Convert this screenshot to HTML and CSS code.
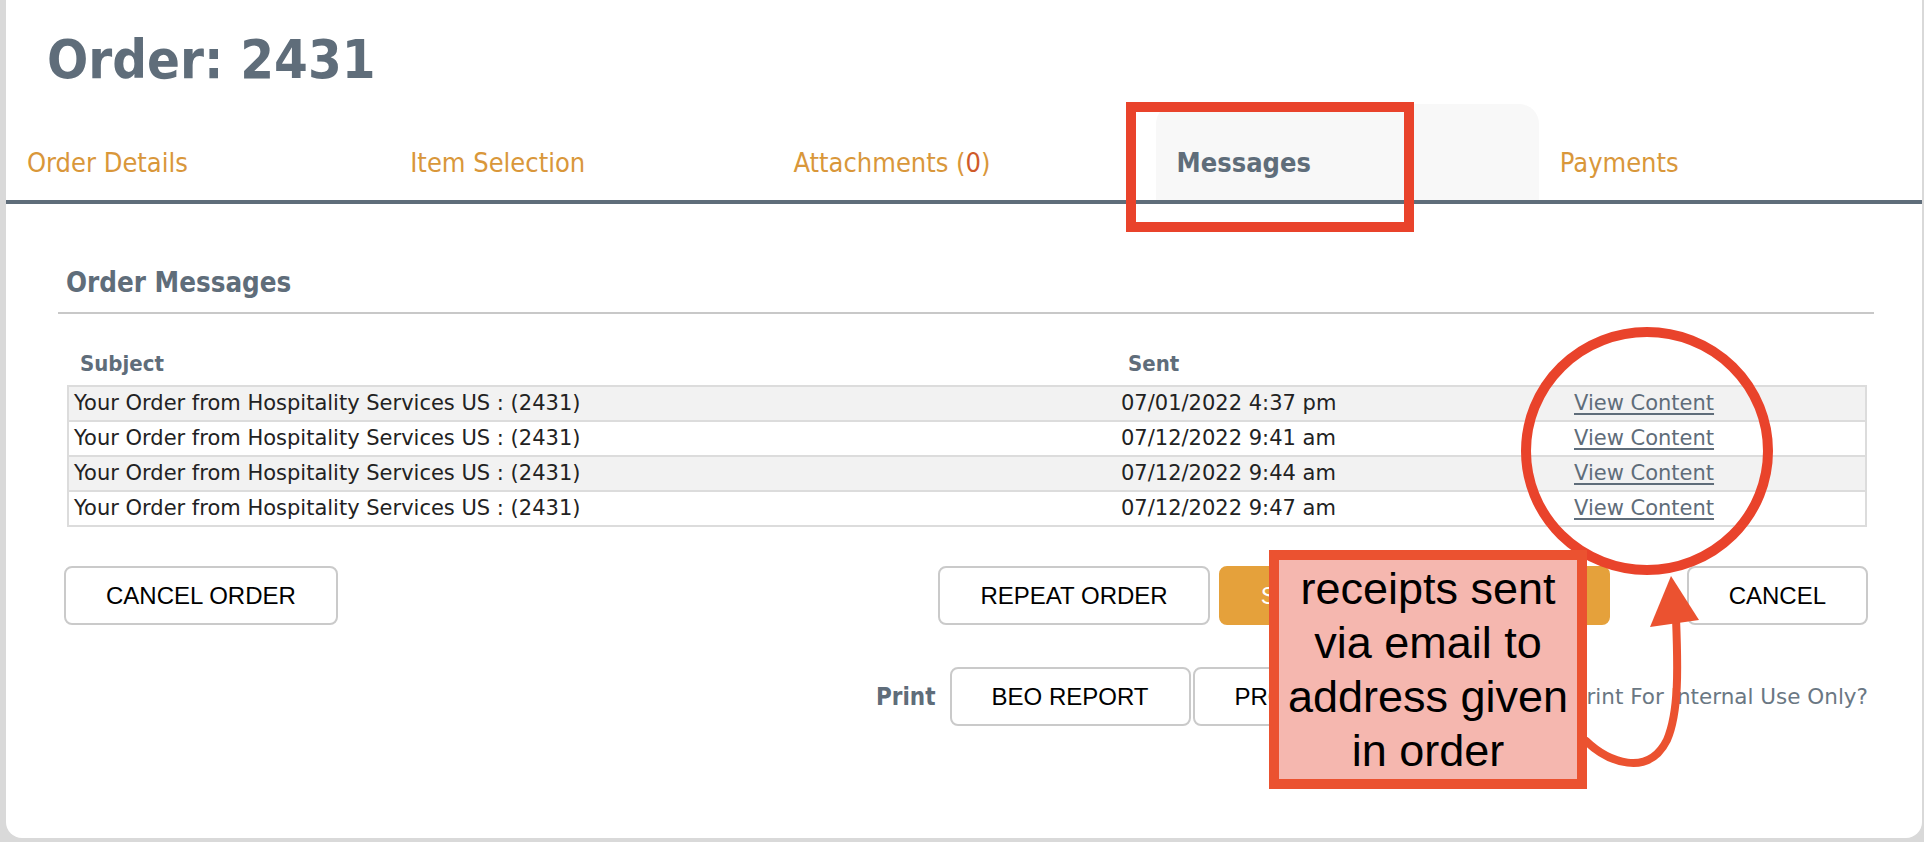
FILE: index.html
```html
<!DOCTYPE html>
<html lang="en">
<head>
<meta charset="utf-8">
<title>Order: 2431 – Messages</title>
<link rel="stylesheet" href="styles.css">
</head>
<body>
<div class="card">
  <h1 class="title">Order: 2431</h1>
  <nav class="tabs">
    <a class="tab">Order Details</a>
    <a class="tab">Item Selection</a>
    <a class="tab">Attachments (<span class="count">0</span>)</a>
    <a class="tab tab-active">Messages</a>
    <a class="tab">Payments</a>
  </nav>

  <section class="messages">
    <h2 class="section-title">Order Messages</h2>
    <table class="msg-table">
      <colgroup>
        <col class="col-subject">
        <col class="col-sent">
        <col class="col-link">
      </colgroup>
      <thead>
        <tr><th>Subject</th><th>Sent</th><th></th></tr>
      </thead>
      <tbody>
        <tr><td>Your Order from Hospitality Services US : (2431)</td><td>07/01/2022 4:37 pm</td><td><a class="link">View Content</a></td></tr>
        <tr><td>Your Order from Hospitality Services US : (2431)</td><td>07/12/2022 9:41 am</td><td><a class="link">View Content</a></td></tr>
        <tr><td>Your Order from Hospitality Services US : (2431)</td><td>07/12/2022 9:44 am</td><td><a class="link">View Content</a></td></tr>
        <tr><td>Your Order from Hospitality Services US : (2431)</td><td>07/12/2022 9:47 am</td><td><a class="link">View Content</a></td></tr>
      </tbody>
    </table>

    <div class="actions">
      <button class="btn">CANCEL ORDER</button>
      <div class="actions-right">
        <button class="btn">REPEAT ORDER</button>
        <button class="btn btn-primary">SAVE ORDER CHANGES</button>
        <button class="btn btn-cancel">CANCEL</button>
      </div>
    </div>

    <div class="print-row">
      <span class="print-label">Print</span>
      <button class="btn">BEO REPORT</button>
      <button class="btn btn-pro">PROPOSAL REPORT</button>
      <span class="internal">Print For Internal Use Only?</span>
    </div>
  </section>
</div>

<svg class="marks" width="1924" height="842" viewBox="0 0 1924 842">
  <rect x="1131" y="107" width="278" height="120" fill="none" stroke="#e9432b" stroke-width="10"/>
  <ellipse cx="1647" cy="451" rx="121" ry="119" fill="none" stroke="#e9432b" stroke-width="10"/>
  <path d="M1586 741 C 1608 762, 1648 778, 1667 740 C 1679 712, 1678 668, 1676 618" fill="none" stroke="#eb5230" stroke-width="8" stroke-linecap="round"/>
  <polygon points="1671,576 1650,627 1699,620" fill="#eb5230"/>
</svg>
<div class="note">receipts sent via email to address given in order</div>
</body>
</html>
```

FILE: styles.css
```css
* { box-sizing: border-box; }

html, body {
  margin: 0;
  padding: 0;
}

body {
  width: 1924px;
  height: 842px;
  background: #d9d9d9;
  position: relative;
  overflow: hidden;
  font-family: "DejaVu Sans Condensed", "DejaVu Sans", sans-serif;
  font-stretch: condensed;
}

.card {
  margin-left: 6px;
  margin-right: 2px;
  height: 838px;
  background: #ffffff;
  border-radius: 0 0 16px 16px;
  padding-top: 28px;
}

.title {
  margin: 0;
  padding-left: 41px;
  font-size: 54px;
  line-height: 64px;
  font-weight: bold;
  color: #5f6d7a;
}

.tabs {
  display: flex;
  margin-top: 12px;
  border-bottom: 4px solid #5f6d7a;
}

.tab {
  flex: 1 1 0;
  padding: 43px 21px 21px;
  font-size: 27px;
  line-height: 32px;
  color: #d9973a;
  white-space: nowrap;
}

.count { color: #cf5a2a; }

.tab-active {
  background: #f8f8f8;
  border-radius: 20px 20px 0 0;
  color: #5f6d7a;
  font-weight: bold;
}

.messages {
  margin: 62px 48px 0 52px;
}

.section-title {
  margin: 0;
  padding: 0 0 14px 8px;
  border-bottom: 2px solid #c8c8c8;
  font-size: 27.5px;
  line-height: 32px;
  font-weight: bold;
  color: #5f6d7a;
}

.msg-table {
  width: 1798px;
  margin: 27px 9px 0;
  border-collapse: collapse;
  table-layout: fixed;
}

.col-subject { width: 1048px; }
.col-sent { width: 453px; }
.col-link { width: 297px; }

.msg-table th {
  height: 45px;
  padding: 0 0 0 12px;
  text-align: left;
  vertical-align: middle;
  font-size: 22px;
  font-weight: bold;
  color: #5f6d7a;
}

.msg-table td {
  height: 33px;
  padding: 0 0 0 5px;
  line-height: 33px;
  font-family: "DejaVu Sans", sans-serif;
  font-stretch: normal;
  font-size: 21px;
  color: #222222;
  white-space: nowrap;
  border-top: 2px solid #dcdcdc;
  border-bottom: 2px solid #dcdcdc;
}

.msg-table td:first-child { border-left: 2px solid #dcdcdc; }
.msg-table td:last-child { border-right: 2px solid #dcdcdc; }

.msg-table tbody tr:nth-child(odd) td { background: #f2f2f2; }

.link {
  color: #5f6d7a;
  text-decoration: underline;
  text-decoration-thickness: 2px;
  text-underline-offset: 3px;
}

.actions {
  display: flex;
  justify-content: space-between;
  margin-top: 39px;
  padding: 0 6px;
}

.actions-right {
  display: flex;
}

.btn {
  height: 59px;
  padding: 0 40px;
  border: 2px solid #cacaca;
  border-radius: 8px;
  background: #ffffff;
  color: #000000;
  font-family: "Liberation Sans", Arial, sans-serif;
  font-size: 24px;
  white-space: nowrap;
}

.btn-primary {
  width: 391px;
  margin-left: 9px;
  padding: 0 40px;
  text-align: left;
  background: #e5a13b;
  border-color: #e5a13b;
  color: #ffffff;
}

.btn-cancel { margin-left: 77px; }

.print-row {
  display: flex;
  justify-content: flex-end;
  align-items: center;
  margin-top: 42px;
  padding-right: 6px;
}

.print-label {
  margin-right: 14px;
  font-size: 24px;
  font-weight: bold;
  color: #5f6d7a;
}

.btn-pro { margin-left: 2px; }

.internal {
  margin-left: 60px;
  font-family: "DejaVu Sans", sans-serif;
  font-stretch: normal;
  font-size: 21.5px;
  color: #6a7783;
}

.marks {
  position: absolute;
  left: 0;
  top: 0;
  pointer-events: none;
}

.note {
  position: absolute;
  left: 1269px;
  top: 550px;
  width: 318px;
  height: 239px;
  padding: 2px 4px 0;
  border: 10px solid #eb5230;
  background: #f5b7af;
  color: #000000;
  font-family: "Liberation Sans", Arial, sans-serif;
  font-size: 45px;
  line-height: 54px;
  text-align: center;
}
```
